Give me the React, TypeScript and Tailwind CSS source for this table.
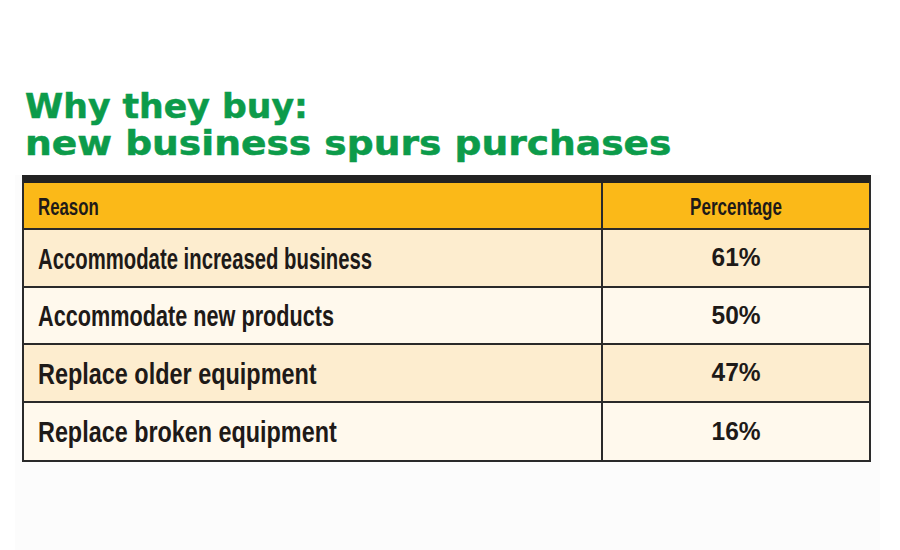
import React from "react";

const rows = [
  { r: "Accommodate increased business", p: "61%", bg: "bg-[#fdedcf]", h: "h-[58px]", sx: "scale-x-[0.677]", line: true },
  { r: "Accommodate new products", p: "50%", bg: "bg-[#fff9ed]", h: "h-[57px]", sx: "scale-x-[0.722]", line: true },
  { r: "Replace older equipment", p: "47%", bg: "bg-[#fdedcf]", h: "h-[58px]", sx: "scale-x-[0.781]", line: true },
  { r: "Replace broken equipment", p: "16%", bg: "bg-[#fff9ed]", h: "h-[57px]", sx: "scale-x-[0.779]", line: false },
];

export default function App() {
  return (
    <div className="w-[900px] h-[550px] bg-white relative overflow-hidden">
      <div className="pt-[88px] pl-[25px]">
        <h1 className="font-['DejaVu_Sans',sans-serif] font-bold text-[#0c9b4a] text-[33px] leading-[37px] [-webkit-text-stroke:0.5px_#0c9b4a]">
          <span className="inline-block origin-left scale-x-[1.05] whitespace-nowrap">Why they buy:</span>
          <br />
          <span className="inline-block origin-left scale-x-[1.14] whitespace-nowrap">new business spurs purchases</span>
        </h1>
      </div>
      <div className="mt-[13px] ml-[15px] mr-[20px] bg-[#fcfcfc] pb-[100px]">
        <div className="ml-[7px] w-[849px] border-2 border-[#2a2a2a] border-t-[8px] border-t-[#222] font-['Liberation_Sans',Arial,sans-serif] font-bold text-[#1e1a18]">
          <div className="grid grid-cols-[579px_1fr] h-[47px] bg-[#fbb918] border-b-2 border-[#2a2a2a]">
            <div className="border-r-2 border-[#2a2a2a] flex items-center pl-[14px] pt-[4px] text-[23px]">
              <span className="inline-block origin-left scale-x-[0.73]">Reason</span>
            </div>
            <div className="flex items-center justify-center pt-[4px] text-[23px]">
              <span className="inline-block origin-center scale-x-[0.74]">Percentage</span>
            </div>
          </div>
          {rows.map((row) => (
            <div
              key={row.r}
              className={`grid grid-cols-[579px_1fr] ${row.h} ${row.bg} ${row.line ? "border-b-2 border-[#2a2a2a]" : ""}`}
            >
              <div className="border-r-2 border-[#2a2a2a] flex items-center pl-[14px] text-[30px]">
                <span className={`inline-block origin-left whitespace-nowrap ${row.sx}`}>{row.r}</span>
              </div>
              <div className="flex items-center justify-center text-[25px]">
                <span className="inline-block origin-center scale-x-[0.98]">{row.p}</span>
              </div>
            </div>
          ))}
        </div>
      </div>
    </div>
  );
}
